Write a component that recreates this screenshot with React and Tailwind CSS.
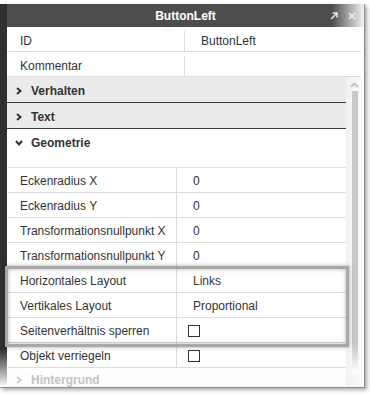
import React from 'react';

const topRows = [
  ['ID', 'ButtonLeft'],
  ['Kommentar', ''],
];

const geoRows = [
  ['Eckenradius X', '0'],
  ['Eckenradius Y', '0'],
  ['Transformationsnullpunkt X', '0'],
  ['Transformationsnullpunkt Y', '0'],
  ['Horizontales Layout', 'Links'],
  ['Vertikales Layout', 'Proportional'],
  ['Seitenverhältnis sperren', 'check'],
  ['Objekt verriegeln', 'check'],
];

const ChevronRight = ({ color = '#333' }) => (
  <svg width="8" height="8" viewBox="0 0 8 8">
    <path d="M2 1 L5.5 4 L2 7" fill="none" stroke={color} strokeWidth="2" />
  </svg>
);

const ChevronDown = () => (
  <svg width="8" height="8" viewBox="0 0 8 8">
    <path d="M1 2 L4 5.5 L7 2" fill="none" stroke="#333" strokeWidth="2" />
  </svg>
);

const SectionHeader = ({ label, open }) => (
  <div
    className={`flex h-[26px] shrink-0 items-center border-b pl-[8px] pt-[2px] ${
      open ? 'border-transparent bg-white' : 'border-[#3a3a3a] bg-[#ebebeb]'
    }`}
  >
    <span className="flex w-[16px] items-center">{open ? <ChevronDown /> : <ChevronRight />}</span>
    <span className="text-[12px] font-bold text-[#333]">{label}</span>
  </div>
);

const App = () => {
  return (
    <div className="relative h-[394px] w-[370px] overflow-hidden bg-white pt-[4px] font-['Liberation_Sans',Arial,sans-serif] text-[12px] text-[#333]">
      <div className="flex h-[384px] w-[365px] overflow-hidden border-b border-r border-[#8a8a8a] shadow-[2px_2px_4px_rgba(0,0,0,0.35)]">
        <div className="w-[7px] shrink-0 bg-gradient-to-b from-[#303030] from-[90%] to-white" />

        <div className="flex min-h-0 flex-1 flex-col">
          <div className="relative flex h-[23px] shrink-0 items-center justify-center bg-[linear-gradient(to_right,#4d4d4d_0,#4d4d4d_325px,#f4f4f4_100%)]">
            <span className="text-[12px] font-bold text-white">ButtonLeft</span>
            <div className="absolute right-[8px] top-[8px] flex items-center gap-[10px]">
              <svg width="8" height="8" viewBox="0 0 8 8">
                <path d="M1 7 L7 1 M2.5 1 H7 V5.5" fill="none" stroke="#e6e6e6" strokeWidth="1.5" />
              </svg>
              <svg width="8" height="8" viewBox="0 0 8 8">
                <path d="M1 1 L7 7 M7 1 L1 7" fill="none" stroke="#f0f0f0" strokeWidth="1.5" />
              </svg>
            </div>
          </div>

          <div className="mr-[3px] shrink-0">
            {topRows.map(([label, value]) => (
              <div key={label} className="flex h-[25px] items-center border-b border-[#dcdcdc] pt-[4px]">
                <div className="flex h-full w-[178px] items-center border-r border-[#dcdcdc] pl-[13px]">
                  {label}
                </div>
                <div className="pl-[16px]">{value}</div>
              </div>
            ))}
          </div>

          <div className="flex min-h-0 flex-1 overflow-hidden">
            <div className="w-[339px] shrink-0">
              <SectionHeader label="Verhalten" />
              <SectionHeader label="Text" />
              <SectionHeader label="Geometrie" open />

              <div className="ml-[1px] mt-[12px] border-t border-[#e2e2e2]">
                {geoRows.map(([label, value]) => (
                  <div key={label} className="flex h-[25px] items-center border-b border-[#dcdcdc]">
                    <div className="flex h-full w-[169px] items-center border-r border-[#dcdcdc] pl-[12px] pt-[2px]">
                      {label}
                    </div>
                    <div className="pl-[16px] pt-[2px]">
                      {value === 'check' ? (
                        <div className="-ml-[5px] h-[12px] w-[12px] border border-[#333] bg-white" />
                      ) : (
                        value
                      )}
                    </div>
                  </div>
                ))}
              </div>

              <div className="flex h-[24px] items-center bg-gradient-to-b from-white to-[#fafafa] pl-[8px] text-[#c4c4c4]">
                <span className="flex w-[16px] items-center">
                  <ChevronRight color="#d0d0d0" />
                </span>
                <span className="font-bold">Hintergrund</span>
              </div>
            </div>

            <div className="flex w-[16px] shrink-0 flex-col items-center bg-[linear-gradient(to_right,#f2f2f2,#fafafa)] pt-[5px]">
              <svg width="9" height="6" viewBox="0 0 9 6">
                <path d="M1 5 L4.5 1.5 L8 5" fill="none" stroke="#c4c4c4" strokeWidth="2" />
              </svg>
              <div className="ml-[1px] mt-[3px] h-[282px] w-[6px] shrink-0 bg-gradient-to-b from-[#c8c8c8] from-[90%] to-white" />
            </div>
          </div>
        </div>
      </div>

      <div className="absolute left-[5px] top-[266px] h-[81px] w-[344px] border-[3px] border-[#a8a8a8] shadow-[0_0_4px_rgba(0,0,0,0.35),inset_0_0_4px_rgba(0,0,0,0.3)]" />
    </div>
  );
};

export default App;
